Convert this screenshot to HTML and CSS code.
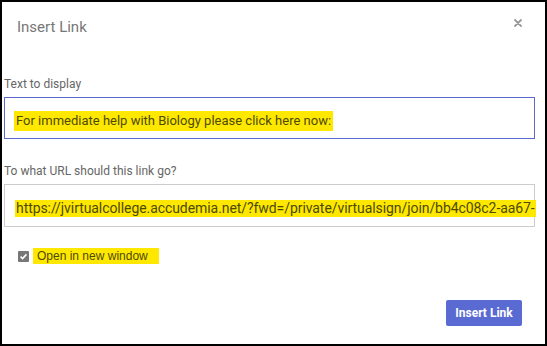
FILE: index.html
```html
<!DOCTYPE html>
<html lang="en">
<head>
  <meta charset="UTF-8">
  <meta name="viewport" content="width=device-width, initial-scale=1.0">
  <title>Insert Link</title>
  <link rel="stylesheet" href="styles.css">
</head>
<body>

  <div class="dialog">
    <div class="dialog-head">
      <h2 class="dialog-title">Insert Link</h2>
      <button type="button" class="btn-close" aria-label="Close">
        <svg width="8" height="8" viewBox="0 0 8 8">
          <path d="M1 1 L7 7 M7 1 L1 7" stroke="#9a9a9a" stroke-width="1.8" stroke-linecap="round"/>
        </svg>
      </button>
    </div>

    <div class="dialog-body">
      <label class="field-label" for="linkText">Text to display</label>
      <div class="field field-focus" id="linkText">
        <span class="mark">For immediate help with Biology please click here now:</span>
      </div>

      <label class="field-label field-label-gap" for="linkUrl">To what URL should this link go?</label>
      <div class="field field-url" id="linkUrl">
        <span class="mark mark-url">https://jvirtualcollege.accudemia.net/?fwd=/private/virtualsign/join/bb4c08c2-aa67-</span>
      </div>

      <label class="check-row">
        <span class="check-box">
          <svg width="11" height="11" viewBox="0 0 11 11">
            <path d="M2.6 5.6 L4.6 7.6 L8.4 3.4" fill="none" stroke="#fff" stroke-width="1.6"/>
          </svg>
        </span>
        <span class="mark mark-check">Open in new window</span>
      </label>
    </div>

    <div class="dialog-foot">
      <button type="button" class="btn-insert">Insert Link</button>
    </div>
  </div>

</body>
</html>
```

FILE: styles.css
```css
body {
  margin: 0;
  font-family: Roboto, "Liberation Sans", sans-serif;
  background: #fff;
}

.dialog {
  width: 547px;
  height: 346px;
  box-sizing: border-box;
  border: 2px solid #000;
  background: #fff;
}

.dialog-head {
  display: flex;
  justify-content: space-between;
  align-items: flex-start;
  padding: 15px 23px 0 15px;
}

.dialog-title {
  margin: 0;
  font-size: 15px;
  font-weight: 400;
  line-height: 20px;
  color: #777;
}

.btn-close {
  margin-top: 2px;
  padding: 0;
  border: none;
  background: none;
  width: 8px;
  height: 8px;
  display: flex;
  cursor: pointer;
}

.dialog-body {
  padding: 39px 10px 0 2px;
}

.field-label {
  display: block;
  font-size: 12px;
  line-height: 16px;
  color: #666;
}

.field-label-gap {
  margin-top: 24px;
}

.field {
  margin-top: 5px;
  height: 42px;
  box-sizing: border-box;
  border: 1px solid #ccc;
  padding: 13px 9px 0 9px;
  font-size: 13px;
  white-space: nowrap;
}

.field-focus {
  border-color: #5b6bcd;
}

.field-url {
  height: 43px;
  padding: 15px 9px 0 10px;
  font-size: 14px;
}

.mark {
  display: inline-block;
  background: #ffe800;
  color: #4d4a00;
  line-height: 20px;
  padding: 0 2px;
  vertical-align: top;
}

.mark-url {
  width: 518px;
  line-height: 17px;
  letter-spacing: -0.07px;
  padding: 0 2px 0 1px;
}

.check-row {
  display: flex;
  align-items: center;
  margin-top: 21px;
  height: 16px;
}

.check-box {
  display: flex;
  width: 11px;
  height: 11px;
  margin-left: 14px;
  margin-right: 4px;
  background: #777;
  border-radius: 1px;
}

.mark-check {
  font-family: "Liberation Sans", sans-serif;
  font-size: 12px;
  line-height: 16px;
  padding: 0 11px 0 4px;
  white-space: nowrap;
}

.dialog-foot {
  display: flex;
  justify-content: flex-end;
  padding: 36px 23px 0 0;
}

.btn-insert {
  width: 76px;
  height: 26px;
  padding: 0;
  border: none;
  border-radius: 2px;
  background: #5a6ad3;
  color: #fff;
  font-family: Roboto, sans-serif;
  font-size: 12px;
  font-weight: 700;
  cursor: pointer;
}
```
